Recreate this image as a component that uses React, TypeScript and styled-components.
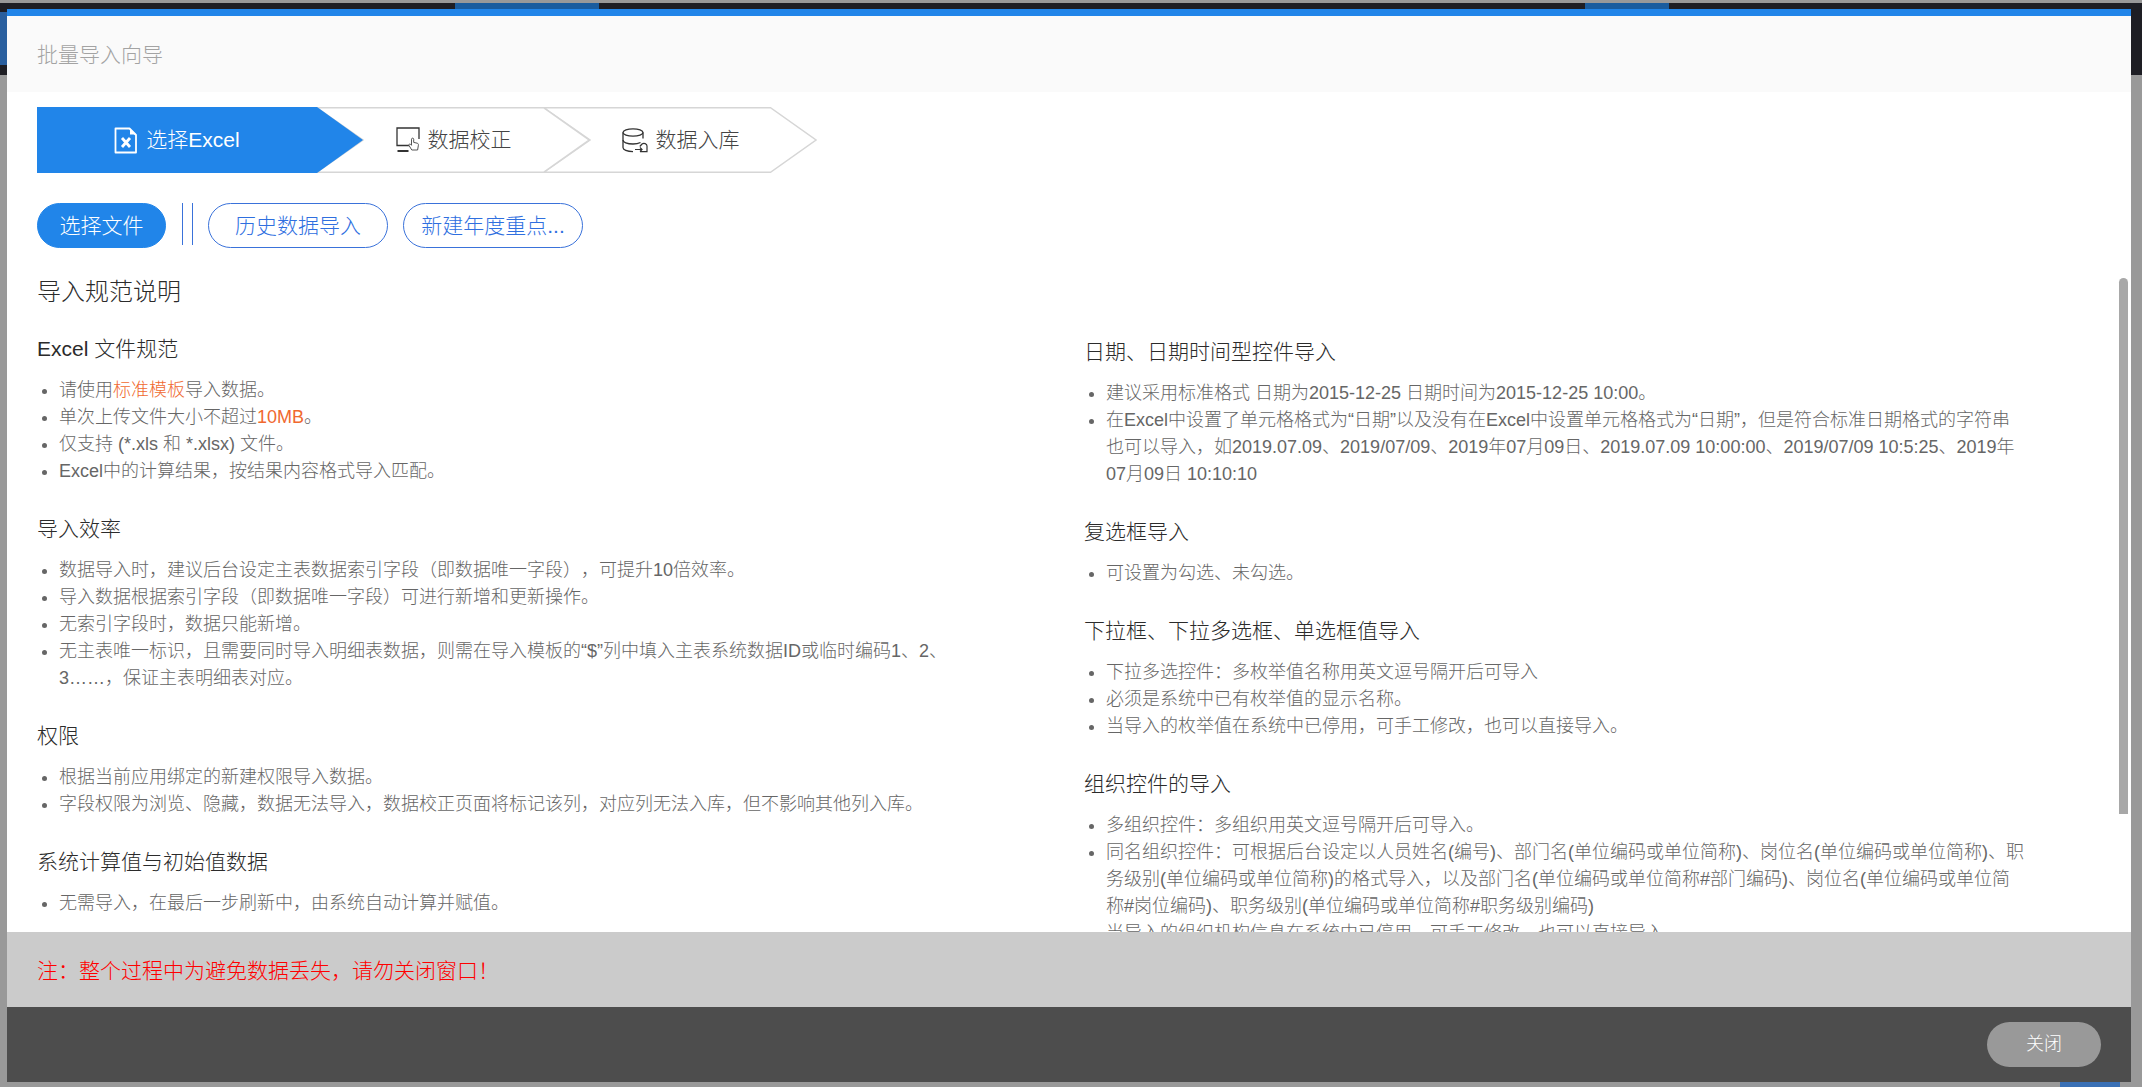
import React from "react";
import styled, { createGlobalStyle } from "styled-components";

const Global = createGlobalStyle`
  html, body { margin: 0; padding: 0; }
  body {
    font-family: "Liberation Sans", "Noto Sans CJK SC", sans-serif;
    background: #999;
    text-spacing-trim: space-all;
    text-autospace: no-autospace;
  }
`;

const Page = styled.div`
  position: relative;
  width: 2142px;
  height: 1087px;
  background: #999;
  overflow: hidden;
  display: flex;
  flex-direction: column;
`;
const TopStrip = styled.div`
  margin-top: 3px;
  height: 72px;
  background: #1e1e24;
  display: flex;
  align-items: flex-start;
`;
const SideTab = styled.div`
  width: 7px;
  height: 53px;
  margin-top: 9px;
  background: #2a5f9e;
`;
const NavTab = styled.div<{ $left: number; $width: number }>`
  margin-left: ${(p) => p.$left}px;
  width: ${(p) => p.$width}px;
  height: 6px;
  background: #1a5c9e;
`;
const BottomChip = styled.div`
  margin-top: auto;
  margin-left: 2060px;
  width: 60px;
  height: 5px;
  background: #3a70b5;
`;

const Modal = styled.div`
  position: absolute;
  left: 7px;
  top: 9px;
  width: 2124px;
  height: 1073px;
  display: flex;
  flex-direction: column;
  background: #fff;
  border-top: 7px solid #2185e9;
  box-sizing: border-box;
`;
const Header = styled.div`
  flex: none;
  box-sizing: border-box;
  height: 76px;
  background: #fafafa;
  padding: 0 0 2px 30px;
  display: flex;
  align-items: center;
  font-size: 21px;
  font-weight: 300;
  color: #a3a3a3;
`;
const Body = styled.div`
  position: relative;
  flex: 1;
  min-height: 0;
  overflow: hidden;
  padding: 15px 0 0 30px;
`;
const Thumb = styled.div`
  position: absolute;
  left: 2112px;
  top: 186px;
  width: 9px;
  height: 536px;
  border-radius: 5px 5px 0 0;
  background: #a8a8a8;
`;

const Steps = styled.div`
  display: flex;
  height: 66px;
`;
const StepBox = styled.div<{ $active?: boolean; $width: number; $z: number }>`
  position: relative;
  flex: none;
  box-sizing: border-box;
  width: ${(p) => p.$width}px;
  height: 66px;
  z-index: ${(p) => p.$z};
  padding-right: ${(p) => (p.$active ? 46 : 0)}px;
  margin-right: -46px;
  display: flex;
  align-items: center;
  justify-content: center;
  gap: 8px;
  font-size: 21px;
  font-weight: 300;
  color: ${(p) => (p.$active ? "#fff" : "#444")};
`;
const StepShape = styled.svg`
  position: absolute;
  left: 0;
  top: 0;
  width: 100%;
  height: 100%;
`;
const StepIcon = styled.svg`
  position: relative;
  flex: none;
`;
const StepLabel = styled.span`
  position: relative;
  padding-bottom: 5px;
`;

const Actions = styled.div`
  display: flex;
  margin-top: 30px;
  height: 45px;
`;
const Pill = styled.button<{ $primary?: boolean; $width: number }>`
  box-sizing: border-box;
  width: ${(p) => p.$width}px;
  height: 45px;
  border-radius: 23px;
  padding: 0 0 3px;
  font-family: inherit;
  font-size: 21px;
  font-weight: 300;
  white-space: nowrap;
  border: 1px solid ${(p) => (p.$primary ? "#2185e9" : "#3a72da")};
  background: ${(p) => (p.$primary ? "#2185e9" : "#fff")};
  color: ${(p) => (p.$primary ? "#fff" : "#2f6fdf")};
  margin-right: 15px;
`;
const Divider = styled.div`
  box-sizing: border-box;
  width: 11px;
  height: 42px;
  margin: 0 15px 0 1px;
  border-left: 1px solid #3a72da;
  border-right: 1px solid #3a72da;
`;

const Columns = styled.div`
  display: grid;
  grid-template-columns: 1047px 1fr;
  margin-top: 28px;
`;
const Column = styled.div<{ $offset?: number }>`
  padding-top: ${(p) => p.$offset ?? 0}px;
  padding-right: 104px;
`;
const GuideTitle = styled.div`
  font-size: 24px;
  font-weight: 300;
  line-height: 32px;
  color: #2b2b2b;
  margin-bottom: 26px;
`;
const Section = styled.section`
  margin-bottom: 29px;
`;
const SectionTitle = styled.div`
  font-size: 21px;
  font-weight: 300;
  line-height: 30px;
  color: #2b2b2b;
  margin-bottom: 13px;
`;
const Rules = styled.ul`
  list-style: disc;
  margin: 0;
  padding: 0 0 0 22px;
`;
const Rule = styled.li`
  font-size: 18px;
  font-weight: 300;
  line-height: 27px;
  color: #666;
`;
const Mark = styled.span`
  color: #f0692f;
`;

const Note = styled.div`
  position: relative;
  flex: none;
  box-sizing: border-box;
  height: 75px;
  background: #cbcbcb;
  padding: 0 0 2px 30px;
  display: flex;
  align-items: center;
  font-size: 21px;
  font-weight: 300;
  color: #f00;
`;
const Footer = styled.div`
  flex: none;
  height: 75px;
  background: #4d4d4d;
  display: flex;
  align-items: center;
  justify-content: flex-end;
  padding-right: 30px;
`;
const CloseButton = styled.button`
  width: 114px;
  height: 45px;
  border: 0;
  border-radius: 23px;
  background: #999;
  color: #fff;
  padding: 0 0 5px;
  font-family: inherit;
  font-size: 18px;
  font-weight: 300;
`;

type Sec = { title: string; rules: React.ReactNode[] };

const left: Sec[] = [
  {
    title: "Excel 文件规范",
    rules: [
      <>请使用<Mark>标准模板</Mark>导入数据。</>,
      <>单次上传文件大小不超过<Mark>10MB</Mark>。</>,
      "仅支持 (*.xls 和 *.xlsx) 文件。",
      "Excel中的计算结果，按结果内容格式导入匹配。",
    ],
  },
  {
    title: "导入效率",
    rules: [
      "数据导入时，建议后台设定主表数据索引字段（即数据唯一字段），可提升10倍效率。",
      "导入数据根据索引字段（即数据唯一字段）可进行新增和更新操作。",
      "无索引字段时，数据只能新增。",
      "无主表唯一标识，且需要同时导入明细表数据，则需在导入模板的“$”列中填入主表系统数据ID或临时编码1、2、3……，保证主表明细表对应。",
    ],
  },
  {
    title: "权限",
    rules: [
      "根据当前应用绑定的新建权限导入数据。",
      "字段权限为浏览、隐藏，数据无法导入，数据校正页面将标记该列，对应列无法入库，但不影响其他列入库。",
    ],
  },
  {
    title: "系统计算值与初始值数据",
    rules: ["无需导入，在最后一步刷新中，由系统自动计算并赋值。"],
  },
];

const right: Sec[] = [
  {
    title: "日期、日期时间型控件导入",
    rules: [
      "建议采用标准格式 日期为2015-12-25 日期时间为2015-12-25 10:00。",
      "在Excel中设置了单元格格式为“日期”以及没有在Excel中设置单元格格式为“日期”，但是符合标准日期格式的字符串也可以导入，如2019.07.09、2019/07/09、2019年07月09日、2019.07.09 10:00:00、2019/07/09 10:5:25、2019年07月09日 10:10:10",
    ],
  },
  { title: "复选框导入", rules: ["可设置为勾选、未勾选。"] },
  {
    title: "下拉框、下拉多选框、单选框值导入",
    rules: [
      "下拉多选控件：多枚举值名称用英文逗号隔开后可导入",
      "必须是系统中已有枚举值的显示名称。",
      "当导入的枚举值在系统中已停用，可手工修改，也可以直接导入。",
    ],
  },
  {
    title: "组织控件的导入",
    rules: [
      "多组织控件：多组织用英文逗号隔开后可导入。",
      "同名组织控件：可根据后台设定以人员姓名(编号)、部门名(单位编码或单位简称)、岗位名(单位编码或单位简称)、职务级别(单位编码或单位简称)的格式导入，以及部门名(单位编码或单位简称#部门编码)、岗位名(单位编码或单位简称#岗位编码)、职务级别(单位编码或单位简称#职务级别编码)",
      "当导入的组织机构信息在系统中已停用，可手工修改，也可以直接导入。",
    ],
  },
];

const Sections = ({ items }: { items: Sec[] }) => (
  <>
    {items.map((s) => (
      <Section key={s.title}>
        <SectionTitle>{s.title}</SectionTitle>
        <Rules>
          {s.rules.map((r, i) => (
            <Rule key={i}>{r}</Rule>
          ))}
        </Rules>
      </Section>
    ))}
  </>
);

const ExcelIcon = () => (
  <StepIcon width="24" height="27" viewBox="0 0 24 27" fill="none">
    <path d="M1.5 1.5H15.5L22 8V25.5H1.5Z" stroke="#fff" strokeWidth="1.8" strokeLinejoin="round" />
    <path d="M16 1.5V7.5H22Z" fill="#fff" />
    <path d="M8 11L16 20M16 11L8 20" stroke="#fff" strokeWidth="2.8" />
  </StepIcon>
);

const CheckIcon = () => (
  <StepIcon width="24" height="26" viewBox="0 0 24 26" fill="none">
    <path d="M14 18.5H1V1H23V12" stroke="#333" strokeWidth="1.3" />
    <rect x="1.5" y="23" width="11" height="2" fill="#333" />
    <path
      d="M15.8 23L13 18.5C12.4 17.3 13.8 16.6 14.8 17.6L15.5 18.3V12.2C15.5 10.8 17.7 10.8 17.7 12.2V15.4L21.2 16.2C22.2 16.5 22.6 17.2 22.4 18.2L21.6 23Z"
      fill="#fff"
      stroke="#555"
      strokeWidth="1"
      strokeLinejoin="round"
    />
  </StepIcon>
);

const StoreIcon = () => (
  <StepIcon width="26" height="25" viewBox="0 0 26 25" fill="none">
    <ellipse cx="11" cy="4.5" rx="10" ry="3.7" stroke="#333" strokeWidth="1.3" />
    <path d="M1 4.5V19.5C1 21.8 5 23.6 11 23.6" stroke="#333" strokeWidth="1.3" />
    <path d="M21 4.5V10.5" stroke="#333" strokeWidth="1.3" />
    <path d="M1 12C1 14.2 5 16 11 16C14 16 16.5 15.5 18.5 14.5" stroke="#333" strokeWidth="1.3" />
    <path d="M18 23.6H25V18C25 15.6 21.8 14.6 20 16L17.8 18.5" stroke="#333" strokeWidth="1.2" />
    <path d="M13 21.5H20M18 19.5L20 21.5L18 23.5" stroke="#333" strokeWidth="1.2" />
  </StepIcon>
);

const Chevron = () => (
  <StepShape viewBox="0 0 273 66" preserveAspectRatio="none" fill="none">
    <path d="M0 0.75H226.5L272 33L226.5 65.25H0L46 33Z" fill="#fff" stroke="#d6d6d6" strokeWidth="1.5" />
  </StepShape>
);

export default function App() {
  return (
    <Page>
      <Global />
      <TopStrip>
        <SideTab />
        <NavTab $left={448} $width={144} />
        <NavTab $left={986} $width={84} />
      </TopStrip>
      <BottomChip />
      <Modal>
        <Header>批量导入向导</Header>
        <Body>
          <Steps>
            <StepBox $active $width={326} $z={3}>
              <StepShape viewBox="0 0 326 66" preserveAspectRatio="none">
                <path d="M0 0H280L326 33L280 66H0Z" fill="#2185e9" />
              </StepShape>
              <ExcelIcon />
              <StepLabel>选择Excel</StepLabel>
            </StepBox>
            <StepBox $width={273} $z={2}>
              <Chevron />
              <CheckIcon />
              <StepLabel>数据校正</StepLabel>
            </StepBox>
            <StepBox $width={273} $z={1}>
              <Chevron />
              <StoreIcon />
              <StepLabel>数据入库</StepLabel>
            </StepBox>
          </Steps>
          <Actions>
            <Pill $primary $width={129}>选择文件</Pill>
            <Divider />
            <Pill $width={180}>历史数据导入</Pill>
            <Pill $width={180}>新建年度重点...</Pill>
          </Actions>
          <Columns>
            <Column>
              <GuideTitle>导入规范说明</GuideTitle>
              <Sections items={left} />
            </Column>
            <Column $offset={61}>
              <Sections items={right} />
            </Column>
          </Columns>
          <Thumb />
        </Body>
        <Note>注：整个过程中为避免数据丢失，请勿关闭窗口！</Note>
        <Footer>
          <CloseButton>关闭</CloseButton>
        </Footer>
      </Modal>
    </Page>
  );
}
